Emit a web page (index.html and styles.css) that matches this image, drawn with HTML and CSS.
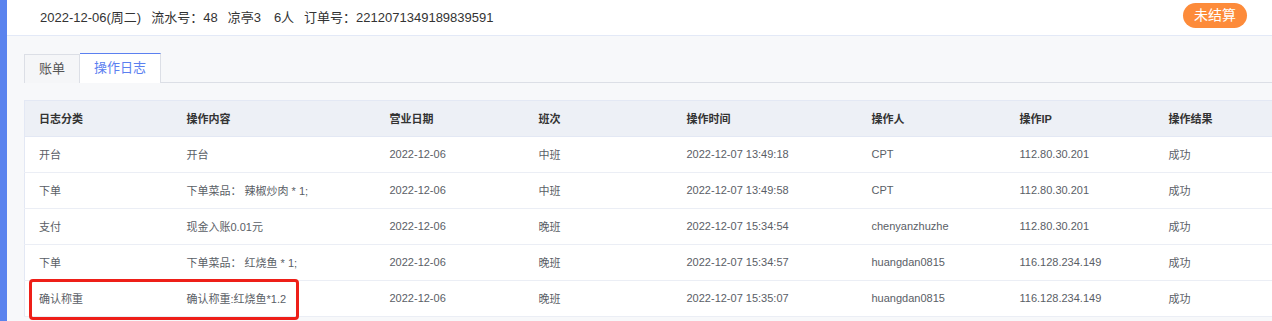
FILE: index.html
```html
<!DOCTYPE html>
<html lang="zh">
<head>
<meta charset="utf-8">
<link rel="stylesheet" href="styles.css">
</head>
<body>
<div class="app">
  <div class="side"></div>
  <div class="main">
    <div class="topbar">
      <div class="info">
        <span>2022-12-06(周二)</span>
        <span>流水号：48</span>
        <span>凉亭3</span>
        <span class="wide">6人</span>
        <span>订单号：2212071349189839591</span>
      </div>
      <span class="badge">未结算</span>
    </div>
    <div class="content">
      <div class="tabs">
        <div class="tab">账单</div>
        <div class="tab active">操作日志</div>
      </div>
      <div class="table-wrap">
        <table class="log">
          <colgroup>
            <col class="c1"><col class="c2"><col class="c3"><col class="c4"><col class="c5"><col class="c6"><col class="c7"><col class="c8">
          </colgroup>
          <thead>
            <tr><th>日志分类</th><th>操作内容</th><th>营业日期</th><th>班次</th><th>操作时间</th><th>操作人</th><th>操作IP</th><th>操作结果</th></tr>
          </thead>
          <tbody>
            <tr><td>开台</td><td>开台</td><td>2022-12-06</td><td>中班</td><td>2022-12-07 13:49:18</td><td>CPT</td><td>112.80.30.201</td><td>成功</td></tr>
            <tr><td>下单</td><td>下单菜品：&nbsp;辣椒炒肉 * 1;</td><td>2022-12-06</td><td>中班</td><td>2022-12-07 13:49:58</td><td>CPT</td><td>112.80.30.201</td><td>成功</td></tr>
            <tr><td>支付</td><td>现金入账0.01元</td><td>2022-12-06</td><td>晚班</td><td>2022-12-07 15:34:54</td><td>chenyanzhuzhe</td><td>112.80.30.201</td><td>成功</td></tr>
            <tr><td>下单</td><td>下单菜品：&nbsp;红烧鱼 * 1;</td><td>2022-12-06</td><td>晚班</td><td>2022-12-07 15:34:57</td><td>huangdan0815</td><td>116.128.234.149</td><td>成功</td></tr>
            <tr><td>确认称重</td><td>确认称重:红烧鱼*1.2</td><td>2022-12-06</td><td>晚班</td><td>2022-12-07 15:35:07</td><td>huangdan0815</td><td>116.128.234.149</td><td>成功</td></tr>
          </tbody>
        </table>
        <div class="mark"></div>
      </div>
    </div>
  </div>
</div>
</body>
</html>
```

FILE: styles.css
```css
* { box-sizing: border-box; }
html, body {
  margin: 0;
  padding: 0;
  width: 1272px;
  height: 321px;
  overflow: hidden;
  background: #f7f8fa;
  font-family: "Liberation Sans", "Noto Sans CJK SC", sans-serif;
}
.app {
  display: flex;
  height: 321px;
}
.side {
  width: 7px;
  flex: none;
  background: #5a83ee;
}
.main {
  flex: 1;
  min-width: 0;
}
.topbar {
  height: 36px;
  background: #fff;
  border-bottom: 1px solid #e3e9f7;
  display: flex;
  align-items: center;
  justify-content: space-between;
  padding: 0 25px 2px 33px;
}
.info {
  display: flex;
  gap: 10px;
  font-size: 13px;
  color: #333;
}
.info .wide { margin-left: 3px; }
.badge {
  background: #fd8b3a;
  color: #fff;
  font-size: 14px;
  height: 25px;
  line-height: 25px;
  padding: 0 11px;
  border-radius: 13px;
  margin-top: -2px;
}
.content {
  padding: 18px 0 0 17px;
}
.tabs {
  display: flex;
  border-bottom: 1px solid #dcdfe6;
  height: 29px;
}
.tab {
  height: 29px;
  line-height: 27px;
  font-size: 13px;
  color: #555;
  padding: 0 14px;
  background: #f5f6f8;
  border: 1px solid #dcdfe6;
  border-bottom: none;
}
.tab.active {
  background: #fff;
  color: #5b80f0;
  border-top: 1px solid #5b80f0;
  border-left: none;
  margin-top: -1px;
  height: 30px;
  line-height: 28px;
}
.table-wrap {
  position: relative;
  margin-top: 17px;
}
.log {
  border-collapse: collapse;
  table-layout: fixed;
  width: 1280px;
  font-size: 11px;
  border-left: 1px solid #e3e8f4;
  border-top: 1px solid #e3e8f4;
}
.c1 { width: 148px; }
.c2 { width: 203px; }
.c3 { width: 149px; }
.c4 { width: 148px; }
.c5 { width: 185px; }
.c6 { width: 148px; }
.c7 { width: 149px; }
.c8 { width: 150px; }
.log th, .log td {
  height: 36px;
  padding: 0 14px 1px;
  text-align: left;
  white-space: nowrap;
}
.log th {
  background: #edf0f6;
  color: #333;
  font-weight: bold;
  border-bottom: 1px solid #e3e8f4;
}
.log td {
  background: #fff;
  color: #5a5e66;
  border-bottom: 1px solid #ebeef5;
}
.mark {
  position: absolute;
  left: 5px;
  top: 179px;
  width: 270px;
  height: 41px;
  border: 3px solid #ee1f18;
  border-radius: 4px;
}
```
